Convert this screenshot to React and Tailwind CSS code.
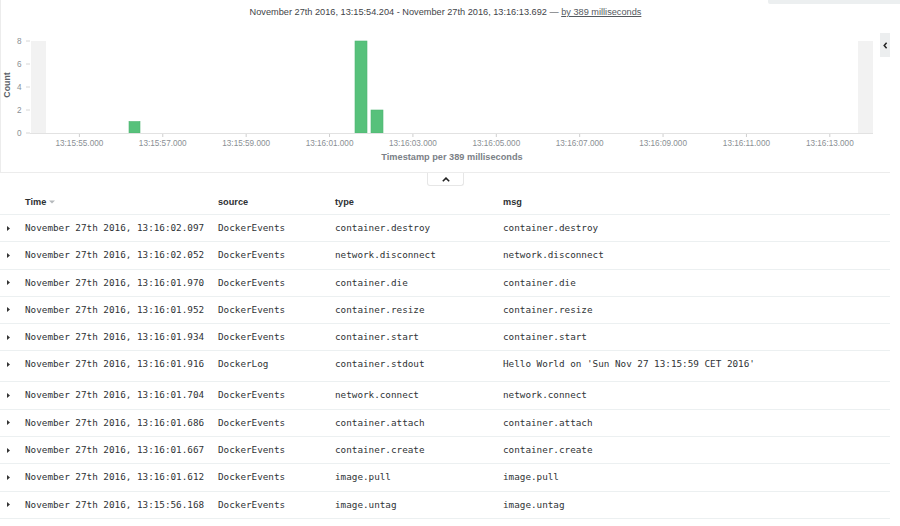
import React from "react";

const rows = [
  ["November 27th 2016, 13:16:02.097", "DockerEvents", "container.destroy", "container.destroy"],
  ["November 27th 2016, 13:16:02.052", "DockerEvents", "network.disconnect", "network.disconnect"],
  ["November 27th 2016, 13:16:01.970", "DockerEvents", "container.die", "container.die"],
  ["November 27th 2016, 13:16:01.952", "DockerEvents", "container.resize", "container.resize"],
  ["November 27th 2016, 13:16:01.934", "DockerEvents", "container.start", "container.start"],
  ["November 27th 2016, 13:16:01.916", "DockerLog", "container.stdout", "Hello World on 'Sun Nov 27 13:15:59 CET 2016'", true],
  ["November 27th 2016, 13:16:01.704", "DockerEvents", "network.connect", "network.connect"],
  ["November 27th 2016, 13:16:01.686", "DockerEvents", "container.attach", "container.attach"],
  ["November 27th 2016, 13:16:01.667", "DockerEvents", "container.create", "container.create"],
  ["November 27th 2016, 13:16:01.612", "DockerEvents", "image.pull", "image.pull"],
  ["November 27th 2016, 13:15:56.168", "DockerEvents", "image.untag", "image.untag"],
];

const xLabels = [
  "13:15:55.000", "13:15:57.000", "13:15:59.000", "13:16:01.000", "13:16:03.000",
  "13:16:05.000", "13:16:07.000", "13:16:09.000", "13:16:11.000", "13:16:13.000",
];

function Chart() {
  const base = 107;
  const yTicks = [8, 6, 4, 2, 0];
  return (
    <svg width="879" height="146" viewBox="0 0 879 146" style={{ fontFamily: "'Liberation Sans', Arial, sans-serif" }}>
      <rect x="30" y="15" width="15" height="92" fill="#f2f2f2" />
      <rect x="857" y="15" width="15" height="92" fill="#f2f2f2" />
      {yTicks.map((v) => {
        const y = base - v * 11.5;
        return (
          <g key={v}>
            <text x="20.5" y={y} fontSize="8.2" fill="#8a8f94" textAnchor="end" dominantBaseline="central">{v}</text>
            <line x1="25" x2="29" y1={y} y2={y} stroke="#d6d6d6" strokeWidth="1" />
          </g>
        );
      })}
      <text
        x="6"
        y="59"
        fontSize="8.8"
        fontWeight="bold"
        fill="#5b6167"
        textAnchor="middle"
        dominantBaseline="central"
        transform="rotate(-90 6 59)"
      >
        Count
      </text>
      <rect x="128" y={base - 11.5} width="11" height="11.5" fill="#57c17b" stroke="#4fb673" strokeWidth="0.6" />
      <rect x="354" y={base - 92} width="12" height="92" fill="#57c17b" stroke="#4fb673" strokeWidth="0.6" />
      <rect x="370" y={base - 23} width="12" height="23" fill="#57c17b" stroke="#4fb673" strokeWidth="0.6" />
      <line x1="29" x2="872" y1={base + 0.5} y2={base + 0.5} stroke="#e2e2e2" strokeWidth="1" />
      {xLabels.map((l, i) => {
        const x = 78.4 + 83.38 * i;
        return (
          <g key={l}>
            <line x1={x} x2={x} y1={base + 1} y2={base + 4} stroke="#cfcfcf" strokeWidth="1" />
            <text x={x} y={base + 10.5} fontSize="8.2" fill="#8a8f94" textAnchor="middle" dominantBaseline="central">{l}</text>
          </g>
        );
      })}
      <text x="451" y="131" fontSize="9.2" fontWeight="bold" fill="#7b8187" textAnchor="middle" dominantBaseline="central">
        Timestamp per 389 milliseconds
      </text>
    </svg>
  );
}

function Caret() {
  return (
    <svg width="3" height="5" viewBox="0 0 3 5" className="block">
      <path d="M0 0 L3 2.5 L0 5 Z" fill="#333" />
    </svg>
  );
}

export default function App() {
  const mono = { fontFamily: "'DejaVu Sans Mono', 'Liberation Mono', monospace" };
  return (
    <div
      className="w-[900px] h-[526px] bg-white overflow-hidden relative"
      style={{ fontFamily: "'Liberation Sans', Arial, sans-serif" }}
    >
      <div className="w-[890px]">
        <div className="h-[173px] border-b border-[#ececec] border-l">
          <div className="relative h-[26px] flex items-center justify-center text-[9.2px] text-[#3f4448]">
            <span>
              November 27th 2016, 13:15:54.204 - November 27th 2016, 13:16:13.692 —{" "}
              <span className="underline text-[#54595e]">by 389 milliseconds</span>
            </span>
          </div>
          <div className="flex">
            <Chart />
            <div className="mt-[7px] w-[10px] h-[24px] bg-[#eceeef] flex items-center justify-center">
              <svg width="5" height="7" viewBox="0 0 5 7">
                <path d="M3.6 0.8 L1.2 3.5 L3.6 6.2" fill="none" stroke="#222" strokeWidth="1.5" />
              </svg>
            </div>
          </div>
        </div>
        <div className="h-[13px] flex justify-center">
          <div className="w-[37px] h-[13px] border-x border-b border-[#e6e6e6] rounded-b-[3px] flex items-center justify-center ml-[1px]">
            <svg width="8" height="5" viewBox="0 0 8 5">
              <path d="M0.8 4.2 L4 1.1 L7.2 4.2" fill="none" stroke="#222" strokeWidth="1.6" />
            </svg>
          </div>
        </div>
        <div className="h-[29px] grid grid-cols-[25px_193px_117px_168px_1fr] items-start border-b border-[#ecf0f1] pt-[9px] leading-[14px] text-[9.2px] font-bold text-[#2d3134]">
          <div />
          <div className="flex items-center gap-[3px] h-[14px]">
            <span>Time</span>
            <svg width="6" height="4" viewBox="0 0 6 4">
              <path d="M0 0.5 L6 0.5 L3 3.5 Z" fill="#b5b9bc" />
            </svg>
          </div>
          <div>source</div>
          <div>type</div>
          <div>msg</div>
        </div>
        {rows.map((r, i) => (
          <div
            key={i}
            className={`${r[4] ? "h-[31px]" : "h-[27.3px]"} grid grid-cols-[25px_193px_117px_168px_1fr] items-start border-b border-[#ecf0f1] pt-[6px] leading-[14px] text-[9.3px] text-[#2f3336]`}
            style={mono}
          >
            <div className="pl-[7px] flex items-center h-[14px]">
              <Caret />
            </div>
            <div className="whitespace-nowrap">{r[0]}</div>
            <div className="whitespace-nowrap">{r[1]}</div>
            <div className="whitespace-nowrap">{r[2]}</div>
            <div className="whitespace-nowrap">{r[3]}</div>
          </div>
        ))}
      </div>
      <div className="absolute top-0 right-0 w-[132px] h-[4px] bg-[#eceff0] rounded-bl-[2px]" />
    </div>
  );
}
